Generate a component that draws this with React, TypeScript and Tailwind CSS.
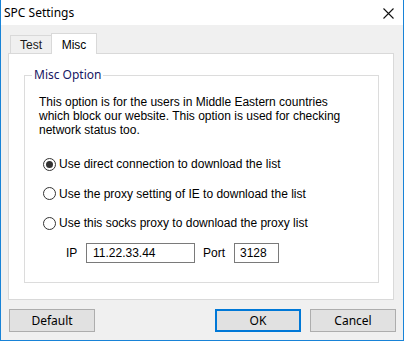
import { FC } from 'react';

const ui = { fontFamily: '"Noto Sans", "Liberation Sans", sans-serif' };
const tahoma = { fontFamily: '"Liberation Sans", Arial, sans-serif' };

const Radio: FC<{ checked?: boolean; label: string }> = ({ checked, label }) => (
  <div className="flex items-center h-[14px]">
    <span className="flex items-center justify-center w-[13px] h-[13px] rounded-full border border-[#333333] bg-white">
      {checked && <span className="w-[7px] h-[7px] rounded-full bg-[#333333]" />}
    </span>
    <span className="ml-[3px]" style={tahoma}>
      {label}
    </span>
  </div>
);

const Button: FC<{ label: string; primary?: boolean; className?: string }> = ({
  label,
  primary,
  className = '',
}) => (
  <button
    className={`w-[86px] h-[23px] bg-[#e1e1e1] text-[12px] text-black flex items-center justify-center ${
      primary ? 'border-2 border-[#0078d7]' : 'border border-[#adadad]'
    } ${className}`}
    style={ui}
  >
    {label}
  </button>
);

const App: FC = () => {
  return (
    <div className="w-[404px] h-[341px] flex flex-col border-x border-b border-[#1883d7] bg-[#f0f0f0] text-black">
      {/* title bar */}
      <div className="h-[25px] bg-white flex items-center justify-between pl-[3px] pr-[9px] shrink-0">
        <span className="text-[12px]" style={ui}>
          SPC Settings
        </span>
        <svg width="11" height="11" viewBox="0 0 11 11" className="mt-[1px]">
          <path d="M0.5 0.5 L10.5 10.5 M10.5 0.5 L0.5 10.5" stroke="#111" strokeWidth="1.1" />
        </svg>
      </div>

      <div className="flex-1 flex flex-col">
        {/* tabs */}
        <div className="flex items-end h-[28px] pl-[9px]">
          <div
            className="h-[18px] w-[41px] border-t border-l border-[#d9d9d9] bg-[#f0f0f0] flex items-center justify-center text-[12px] text-[#1a1a1a]"
            style={tahoma}
          >
            Test
          </div>
          <div
            className="relative z-10 -mb-px h-[21px] w-[46px] border-t border-x border-[#d9d9d9] bg-white flex items-start justify-center pt-[2px] text-[12px]"
            style={tahoma}
          >
            Misc
          </div>
        </div>

        {/* panel */}
        <div className="ml-[7px] w-[386px] h-[247px] border border-[#d9d9d9] bg-white pt-[21px] pl-[15px]">
          <div className="relative w-[355px] h-[208px] border border-[#dcdcdc] pl-[14px] pt-[19px] text-[12px] leading-[14px]">
            <span
              className="absolute left-[7px] top-[-9px] bg-white px-[2px] text-[12px] leading-[16px] text-[#161663]"
              style={ui}
            >
              Misc Option
            </span>
            <p style={tahoma}>
              This option is for the users in Middle Eastern countries
              <br />
              which block our website. This option is used for checking
              <br />
              network status too.
            </p>
            <div className="flex flex-col gap-[15.5px] mt-[20px] pl-[4px]">
              <Radio checked label="Use direct connection to download the list" />
              <Radio label="Use the proxy setting of IE to download the list" />
              <Radio label="Use this socks proxy to download the proxy list" />
            </div>
            <div className="flex items-center mt-[13px] pl-[27px]" style={tahoma}>
              <span className="w-[20px]">IP</span>
              <div className="w-[109px] h-[20px] border border-[#7a7a7a] flex items-center pl-[6px]">
                11.22.33.44
              </div>
              <span className="ml-[8px] w-[31px]">Port</span>
              <div className="w-[45px] h-[20px] border border-[#7a7a7a] flex items-center pl-[5px]">
                3128
              </div>
            </div>
          </div>
        </div>

        {/* buttons */}
        <div className="flex items-start mt-[9px] pl-[8px]">
          <Button label="Default" />
          <Button label="OK" primary className="ml-[120px]" />
          <Button label="Cancel" className="ml-[9px]" />
        </div>
      </div>
    </div>
  );
};

export default App;
